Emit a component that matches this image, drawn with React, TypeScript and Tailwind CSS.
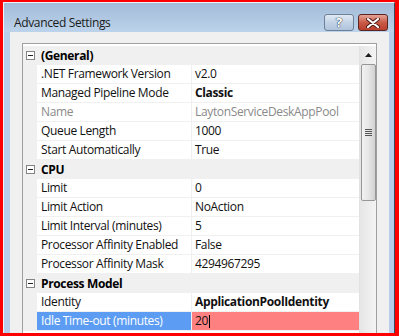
import React from 'react';

type Row =
  | { kind: 'cat'; label: string }
  | { kind: 'prop'; name: string; value: string; bold?: boolean; dim?: boolean; selected?: boolean };

const rows: Row[] = [
  { kind: 'cat', label: '(General)' },
  { kind: 'prop', name: '.NET Framework Version', value: 'v2.0' },
  { kind: 'prop', name: 'Managed Pipeline Mode', value: 'Classic', bold: true },
  { kind: 'prop', name: 'Name', value: 'LaytonServiceDeskAppPool', dim: true },
  { kind: 'prop', name: 'Queue Length', value: '1000' },
  { kind: 'prop', name: 'Start Automatically', value: 'True' },
  { kind: 'cat', label: 'CPU' },
  { kind: 'prop', name: 'Limit', value: '0' },
  { kind: 'prop', name: 'Limit Action', value: 'NoAction' },
  { kind: 'prop', name: 'Limit Interval (minutes)', value: '5' },
  { kind: 'prop', name: 'Processor Affinity Enabled', value: 'False' },
  { kind: 'prop', name: 'Processor Affinity Mask', value: '4294967295' },
  { kind: 'cat', label: 'Process Model' },
  { kind: 'prop', name: 'Identity', value: 'ApplicationPoolIdentity', bold: true },
  { kind: 'prop', name: 'Idle Time-out (minutes)', value: '20', selected: true },
];

function MinusBox() {
  return (
    <div className="flex h-[9px] w-[9px] items-center justify-center border border-[#848484] bg-white">
      <div className="h-px w-[5px] bg-[#222]" />
    </div>
  );
}

function CaptionButtons() {
  return (
    <div className="flex gap-[4px]">
      <div className="flex h-[17px] w-[30px] items-center justify-center rounded-[3px] border border-[#6f8196] bg-gradient-to-b from-[#dfe9f4] via-[#c3d3e6] to-[#aec3db]">
        <span
          className="text-[13px] font-bold leading-none text-white"
          style={{ textShadow: '0 0 1px #3b4a5c, 0 0 1px #3b4a5c, 0 0 1px #3b4a5c' }}
        >
          ?
        </span>
      </div>
      <div className="flex h-[17px] w-[30px] items-center justify-center rounded-[3px] border border-[#5b2621] bg-gradient-to-b from-[#e4a497] via-[#c85a46] to-[#b9402e]">
        <svg width="14" height="10" viewBox="0 0 14 10">
          <path d="M2 1 L12 9 M12 1 L2 9" stroke="#4a1a14" strokeWidth="4" strokeLinecap="round" />
          <path d="M2 1 L12 9 M12 1 L2 9" stroke="#ffffff" strokeWidth="2.2" strokeLinecap="round" />
        </svg>
      </div>
    </div>
  );
}

function Scrollbar() {
  return (
    <div className="flex w-[17px] flex-col border-l border-[#e2e2e2] bg-gradient-to-r from-[#e6e6e6] to-[#f4f4f4]">
      <div className="flex h-[17px] items-center justify-center">
        <svg width="7" height="4" viewBox="0 0 7 4">
          <path d="M0 4 L3.5 0 L7 4 Z" fill="#1e1e1e" />
        </svg>
      </div>
      <div className="ml-[1px] mt-[1px] flex h-[137px] items-center justify-center rounded-[2px] border border-[#979797] bg-gradient-to-r from-[#f2f2f2] via-[#e6e6e6] to-[#d2d2d2]">
        <div className="flex flex-col gap-[1px]">
          <div className="h-px w-[7px] bg-[#555]" />
          <div className="h-px w-[7px] bg-[#555]" />
          <div className="h-px w-[7px] bg-[#555]" />
          <div className="h-px w-[7px] bg-[#555]" />
        </div>
      </div>
    </div>
  );
}

function GridRow({ row }: { row: Row }) {
  if (row.kind === 'cat') {
    return (
      <div className="flex h-[19px] items-center bg-[#f0f0f0]">
        <div className="flex w-[14px] justify-start pl-[3px]">
          <MinusBox />
        </div>
        <span className="pl-[4px] font-bold text-black">{row.label}</span>
      </div>
    );
  }
  return (
    <div className="flex h-[19px] border-b border-[#f0f0f0]">
      <div className="w-[14px] bg-[#f0f0f0]" />
      <div
        className={`flex w-[154px] items-center whitespace-nowrap pl-[4px] ${
          row.selected ? 'bg-[#5c9df3] text-white' : 'bg-white'
        } ${row.dim ? 'text-[#8a8a8a]' : ''}`}
      >
        {row.name}
      </div>
      <div className="w-px bg-[#f0f0f0]" />
      <div
        className={`flex flex-1 items-center overflow-hidden whitespace-nowrap pl-[3px] ${
          row.selected ? 'bg-[#ff8080]' : 'bg-white'
        } ${row.bold ? 'font-bold' : ''} ${row.dim ? 'text-[#8a8a8a]' : ''}`}
      >
        {row.value}
        {row.selected && <span className="ml-[1px] h-[13px] w-px bg-black" />}
      </div>
    </div>
  );
}

export default function App() {
  return (
    <div
      className="h-[336px] w-[399px] overflow-hidden border-solid border-[#ff0000] border-b-[3px] border-l-[3px] border-r-[4px] border-t-[2px] text-[12px] tracking-[-0.35px] text-[#111]"
      style={{ fontFamily: '"Open Sans", "Noto Sans", sans-serif' }}
    >
      <div className="flex h-full flex-col border-l border-r border-t border-[#eef3f9] border-r-[#3c4a5a] bg-[#b6cee9]">
        {/* title bar */}
        <div className="flex h-[29px] shrink-0 items-start justify-between bg-gradient-to-b from-[#a3bbd7] to-[#bcd3eb] pl-[10px] pr-[6px] pt-[11px]">
          <span className="h-[17px] text-[12px] leading-[17px] text-[#1a1a1a]">Advanced Settings</span>
          <CaptionButtons />
        </div>
        {/* client */}
        <div className="flex min-h-0 flex-1 overflow-hidden pl-[6px] pr-[5px]">
          <div className="flex-1 bg-[#f0f0f0] pl-[12px] pr-[12px] pt-[11px]">
            <div className="flex h-[300px] border border-b-0 border-[#a0a0a0] bg-white pt-[2px]">
              <div className="w-[336px]">
                {rows.map((r, i) => (
                  <GridRow key={i} row={r} />
                ))}
              </div>
              <Scrollbar />
            </div>
          </div>
        </div>
      </div>
    </div>
  );
}
